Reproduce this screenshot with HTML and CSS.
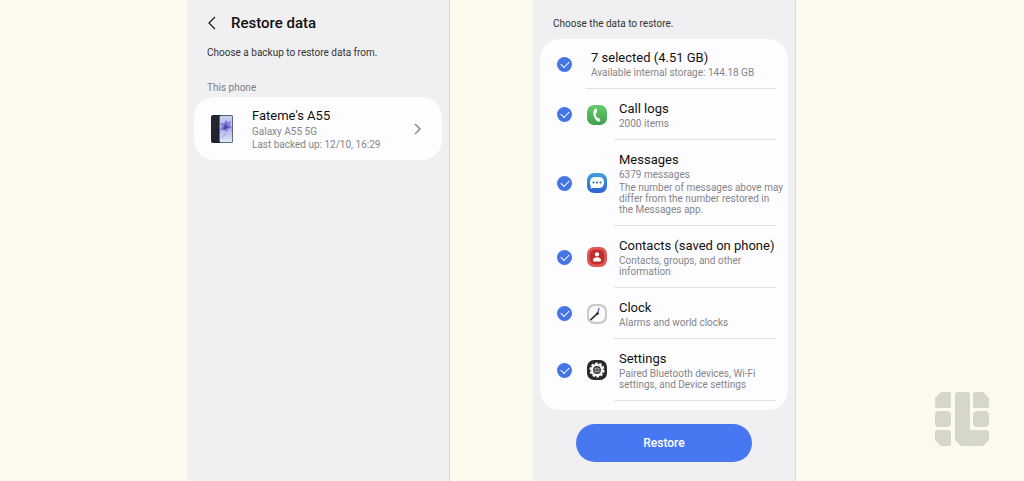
FILE: index.html
```html
<!DOCTYPE html>
<html lang="en">
<head>
    <meta charset="UTF-8">
    <meta name="viewport" content="width=device-width, initial-scale=1.0">
    <title>Restore data</title>
    <link rel="stylesheet" href="styles.css">
</head>
<body>
    <main class="page">
        <section class="screen backup">
            <header class="header">
                <button class="back" aria-label="Back">
                    <svg width="10" height="14" viewBox="0 0 10 14"><path d="M8 1 2 7l6 6" fill="none" stroke="#222" stroke-width="1.3"/></svg>
                </button>
                <h1>Restore data</h1>
            </header>
            <p class="intro">Choose a backup to restore data from.</p>
            <h2 class="section-label">This phone</h2>
            <a class="card device" href="#">
                <svg class="phone" width="22" height="28" viewBox="0 0 22 28">
                    <defs>
                        <linearGradient id="wall" x1="0" y1="0" x2="0" y2="1">
                            <stop offset="0" stop-color="#c5d2f2"/>
                            <stop offset=".5" stop-color="#b0b2ec"/>
                            <stop offset="1" stop-color="#dcecf8"/>
                        </linearGradient>
                    </defs>
                    <rect x="0" y="0" width="13" height="28" rx="2" fill="#20222e"/>
                    <circle cx="3" cy="4" r="1.5" fill="#11131b" stroke="#4b4e5c" stroke-width=".5"/>
                    <circle cx="3" cy="8" r="1.5" fill="#11131b" stroke="#4b4e5c" stroke-width=".5"/>
                    <circle cx="3" cy="12" r="1.5" fill="#11131b" stroke="#4b4e5c" stroke-width=".5"/>
                    <rect x="8" y="0" width="14" height="28" rx="2" fill="#3a3c4c"/>
                    <rect x="8.700" y=".7" width="12.600" height="26.600" rx="1.500" fill="url(#wall)"/>
                    <path d="m15 5 2 2 3-1-1 4 2 3-4 1-1 3-3-2-4 0 2-4-2-3 4 0z" fill="#8b80dc"/>
                    <path d="m15 8 1 3 3 1-4 2-3 1 1-4z" fill="#4e4bb0"/>
                    <path d="m14 17-4 7 5-4z" fill="#a9b2ea"/>
                </svg>
                <div class="device-text">
                    <h3>Fateme's A55</h3>
                    <p>Galaxy A55 5G</p>
                    <p>Last backed up: 12/10, 16:29</p>
                </div>
                <svg width="8" height="12" viewBox="0 0 8 12"><path d="m1 1 5 5-5 5" fill="none" stroke="#8b8b8e" stroke-width="1.5"/></svg>
            </a>
        </section>

        <section class="screen restore">
            <p class="intro">Choose the data to restore.</p>
            <ul class="card list">
                <li class="row row-all">
                    <input type="checkbox" id="all" checked>
                    <label class="row-text" for="all">
                        <strong>7 selected (4.51 GB)</strong>
                        <span>Available internal storage: 144.18 GB</span>
                    </label>
                </li>
                <li class="row">
                    <input type="checkbox" id="calls" checked>
                    <svg class="app" viewBox="0 0 20 20">
                        <defs>
                            <linearGradient id="green" x1="0" y1="0" x2="0" y2="1">
                                <stop offset="0" stop-color="#66cc6c"/>
                                <stop offset="1" stop-color="#3f9f4b"/>
                            </linearGradient>
                        </defs>
                        <rect width="20" height="20" rx="7" fill="url(#green)"/>
                        <path d="M8.500 3.500C6 5 5.800 8.500 7 11.500s3 5.200 5 5.200l1-.7c.5-.4.400-.8.100-1.200l-1.300-1.700c-.4-.4-.8-.4-1.300 0-1.300-1-2-3.600-1.600-5.200.7 0 1.100-.3 1.100-.9L10 4.400c0-.7-.8-1.100-1.500-.9z" fill="#fff"/>
                    </svg>
                    <label class="row-text" for="calls">
                        <strong>Call logs</strong>
                        <span>2000 items</span>
                    </label>
                </li>
                <li class="row">
                    <input type="checkbox" id="messages" checked>
                    <svg class="app" viewBox="0 0 20 20">
                        <defs>
                            <linearGradient id="blue" x1="0" y1="0" x2="0" y2="1">
                                <stop offset="0" stop-color="#44a0dc"/>
                                <stop offset="1" stop-color="#2c62d4"/>
                            </linearGradient>
                        </defs>
                        <rect width="20" height="20" rx="7" fill="url(#blue)"/>
                        <path d="M7.500 4h5C15.500 4 17 6.200 17 9.300s-1.500 5.700-4.500 5.700H5l-1.500.8.400-2.600C3.200 12.300 3 10.800 3 9.300 3 6.200 4.500 4 7.500 4z" fill="#fff"/>
                        <circle cx="6.500" cy="9.500" r="1.100" fill="#2f7195"/>
                        <circle cx="10" cy="9.500" r="1.100" fill="#2f7195"/>
                        <circle cx="13.500" cy="9.500" r="1.100" fill="#2f7195"/>
                    </svg>
                    <label class="row-text" for="messages">
                        <strong>Messages</strong>
                        <span>6379 messages</span>
                        <span class="note">The number of messages above may<br>differ from the number restored in<br>the Messages app.</span>
                    </label>
                </li>
                <li class="row">
                    <input type="checkbox" id="contacts" checked>
                    <svg class="app" viewBox="0 0 20 20">
                        <rect width="20" height="20" rx="7" fill="#e05a57"/>
                        <rect x="2.500" y="2.500" width="15" height="15" rx="6" fill="#bf2f2d"/>
                        <circle cx="10" cy="7.300" r="2.100" fill="#fff"/>
                        <path d="M6 13.300c0-2 1.800-3.100 4-3.100s4 1.100 4 3.100c0 .8-.5 1.200-1.300 1.200H7.300c-.8 0-1.300-.4-1.300-1.200z" fill="#fff"/>
                    </svg>
                    <label class="row-text" for="contacts">
                        <strong>Contacts (saved on phone)</strong>
                        <span>Contacts, groups, and other<br>information</span>
                    </label>
                </li>
                <li class="row">
                    <input type="checkbox" id="clock" checked>
                    <svg class="app" viewBox="0 0 20 20">
                        <rect width="20" height="20" rx="7" fill="#c9c9cb"/>
                        <rect x="2" y="2" width="16" height="16" rx="6" fill="#fbfbfd"/>
                        <path d="m10.500 9.500 1.500-5" stroke="#665fa8" stroke-width="1.300" stroke-linecap="round"/>
                        <path d="M4 15.500 10.500 9.500" stroke="#222" stroke-width="1.700" stroke-linecap="round"/>
                        <circle cx="10.500" cy="9.500" r="1.200" fill="#222"/>
                    </svg>
                    <label class="row-text" for="clock">
                        <strong>Clock</strong>
                        <span>Alarms and world clocks</span>
                    </label>
                </li>
                <li class="row">
                    <input type="checkbox" id="settings" checked>
                    <svg class="app" viewBox="0 0 20 20">
                        <rect width="20" height="20" rx="7" fill="#29292b"/>
                        <circle cx="10" cy="10" r="6.300" fill="#f4f4f4"/>
                        <circle cx="10" cy="10" r="6.700" fill="none" stroke="#f4f4f4" stroke-width="1.800" stroke-dasharray="2.600 1.610"/>
                        <circle cx="10" cy="10" r="3.300" fill="#aaa" stroke="#333" stroke-width="1.200"/>
                        <path d="M10 6.700v6.600M6.700 10h6.600" stroke="#444" stroke-width="1"/>
                    </svg>
                    <label class="row-text" for="settings">
                        <strong>Settings</strong>
                        <span>Paired Bluetooth devices, Wi-Fi<br>settings, and Device settings</span>
                    </label>
                </li>
            </ul>
            <button class="restore-button">Restore</button>
        </section>

        <svg class="logo" width="54" height="54" viewBox="0 0 54 54" fill="#d6d6ca">
            <path d="M6 0h8q2 0 2 2v12q0 2-2 2H2q-2 0-2-2V6z"/>
            <rect x="0" y="19" width="16" height="16" rx="4"/>
            <path d="M2 38h12q2 0 2 2v12q0 2-2 2H6l-6-6v-8q0-2 2-2z"/>
            <path d="M23 0h9q3 0 3 3v35h16q3 0 3 3v7l-6 6H26l-6-6V3q0-3 3-3z"/>
            <path d="M40 0h8l6 6v8q0 2-2 2H40q-2 0-2-2V2q0-2 2-2z"/>
            <rect x="38" y="19" width="16" height="16" rx="4"/>
        </svg>
    </main>
</body>
</html>
```
FILE: styles.css
```css
* {
    box-sizing: border-box;
}
body {
    margin: 0;
    font-family: Roboto, sans-serif;
    font-size: 10px;
    line-height: 11px;
    color: #111;
    background: #fcfaec;
}
h1, h2, h3, p, ul {
    margin: 0;
    padding: 0;
}
.page {
    display: grid;
    grid-template-columns: 187fr 263px 83fr 263px 228fr;
    min-height: 100vh;
}
.screen {
    padding: 0 7px;
    background: #f0f0f2;
    border-right: 1px solid #d9d9d6;
}
.backup {
    grid-column: 2;
}
.header {
    display: flex;
    align-items: center;
    gap: 14px;
    padding: 13px 13px 0;
}
.back {
    display: flex;
    padding: 0;
    border: none;
    background: none;
    cursor: pointer;
}
h1 {
    font-size: 15px;
    line-height: 20px;
    font-weight: 500;
}
.intro {
    padding: 13px 13px 0;
    font-size: 10px;
    line-height: 14px;
    color: #333;
}
.section-label {
    padding: 21px 13px 2px;
    font-size: 10px;
    line-height: 14px;
    font-weight: 400;
    color: #7b7b7e;
}
.card {
    background: #fdfdff;
    border-radius: 20px;
}
.device {
    display: flex;
    align-items: center;
    padding: 10px 20px 9px 17px;
    color: inherit;
    text-decoration: none;
}
.device-text {
    flex: 1;
    margin-left: 19px;
    line-height: 13px;
    color: #858588;
}
.device-text h3 {
    font-size: 13px;
    line-height: 18px;
    font-weight: 400;
    color: #111;
}
.restore {
    grid-column: 4;
    display: flex;
    flex-direction: column;
}
.restore .intro {
    padding: 17px 13px 8px;
}
.list {
    list-style: none;
    padding: 0 12px 9px 17px;
}
.row {
    display: flex;
    align-items: center;
}
.row input {
    flex: none;
    appearance: none;
    width: 15px;
    height: 15px;
    margin: 0 14px 0 0;
    border-radius: 50%;
    border: 1px solid #999;
    cursor: pointer;
}
.row input:checked {
    border: none;
    background: #4574e4;
}
.row input:checked::before {
    content: "";
    display: block;
    width: 7px;
    height: 4px;
    margin: 4px;
    border-left: 1px solid #fff;
    border-bottom: 1px solid #fff;
    transform: rotate(-45deg);
}
.app {
    flex: none;
    width: 20px;
    height: 20px;
    margin: 0 7px 0 1px;
}
.row-text {
    flex: 1;
    min-width: 0;
    padding: 11px 0 10px 5px;
    border-bottom: 1px solid #e2e2e5;
    color: #858588;
}
.row-all .row-text {
    padding-top: 10px;
}
.row-text strong,
.row-text span {
    display: block;
}
.row-text strong {
    font-size: 13px;
    line-height: 18px;
    font-weight: 400;
    color: #111;
}
.row-text .note {
    margin-top: 2px;
    white-space: nowrap;
}
.restore-button {
    align-self: center;
    width: 176px;
    height: 38px;
    margin-top: 14px;
    border: none;
    border-radius: 20px;
    background: #4778f2;
    color: #fff;
    font-family: inherit;
    font-size: 12px;
    font-weight: 500;
    cursor: pointer;
}
.logo {
    grid-column: 5;
    align-self: end;
    justify-self: end;
    margin: 0 35px 35px 0;
}
```
